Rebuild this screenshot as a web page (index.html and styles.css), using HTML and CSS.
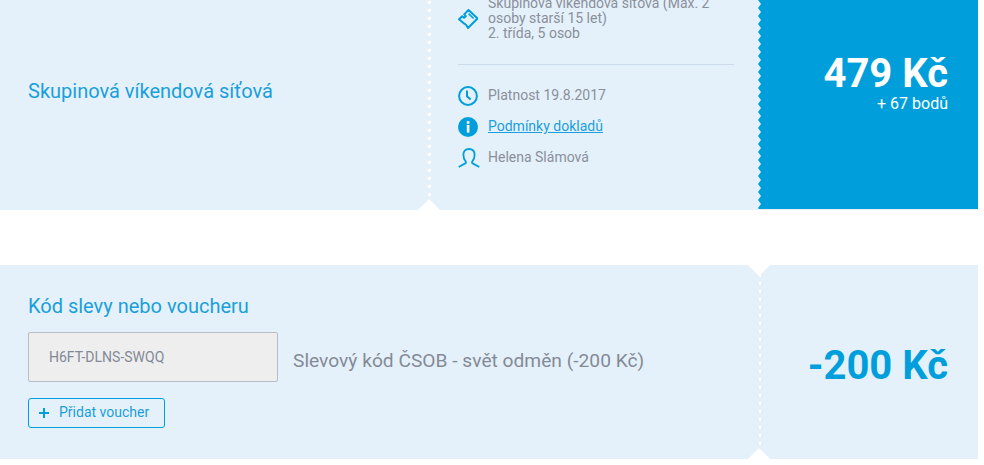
FILE: index.html
```html
<!DOCTYPE html>
<html lang="cs">
<head>
<meta charset="utf-8">
<title>Skupinová víkendová síťová</title>
<link rel="stylesheet" href="styles.css">
</head>
<body>
<section class="panel panel-ticket">
  <div class="ticket-name">
    <h2 class="title">Skupinová víkendová síťová</h2>
    <span class="notch notch-bottom"></span>
  </div>
  <div class="ticket-detail">
    <div class="row row-desc">
      <svg class="icon" viewBox="0 0 20 20" aria-hidden="true"><path d="M10.5 1 19.5 9.5 10 19 8 15.8 6 14.4 1 10.3 4.2 7.2 6 8.8 7.8 7.2 6.2 5.4Z" fill="none" stroke="#009fdb" stroke-width="2" stroke-linejoin="round"/><path d="M10.6 4.6 15.6 9.5" fill="none" stroke="#009fdb" stroke-width="1.6"/></svg>
      <p class="desc">Skupinová víkendová síťová (Max. 2<br>osoby starší 15 let)<br>2. třída, 5 osob</p>
    </div>
    <hr class="sep">
    <div class="row info"><svg class="icon" viewBox="0 0 20 20" aria-hidden="true"><circle cx="10" cy="10" r="8.9" fill="none" stroke="#009fdb" stroke-width="2"/><path d="M9 4.5V10.2L12.6 13.6" fill="none" stroke="#009fdb" stroke-width="2"/></svg><span>Platnost 19.8.2017</span></div>
    <div class="row info"><svg class="icon" viewBox="0 0 20 20" aria-hidden="true"><circle cx="10" cy="10" r="10" fill="#009fdb"/><rect x="8.8" y="4.2" width="2.6" height="2.6" fill="#fff"/><rect x="8.8" y="8" width="2.6" height="7.6" fill="#fff"/></svg><a class="link" href="#">Podmínky dokladů</a></div>
    <div class="row info"><svg class="icon icon-user" viewBox="0 0 22 20" aria-hidden="true"><path d="M.7 19 7.3 15.4C8.2 14.9 8.2 13.9 7.5 13.1 5.8 11.2 5.4 8.8 5.4 6.8 5.4 3 7.6 1 11 1S16.6 3 16.6 6.8C16.6 8.8 16.2 11.2 14.5 13.1 13.8 13.9 13.8 14.9 14.7 15.4L21.3 19" fill="none" stroke="#009fdb" stroke-width="1.8"/></svg><span>Helena Slámová</span></div>
  </div>
  <div class="price-box">
    <svg class="zigzag" aria-hidden="true"><defs><pattern id="teeth" width="3" height="8" patternUnits="userSpaceOnUse"><path d="M0 0 3 4 0 8 3 8 3 0Z" fill="#009fdb"/></pattern></defs><rect width="3" height="209" fill="url(#teeth)"/></svg>
    <strong class="price">479 Kč</strong>
    <span class="points">+ 67 bodů</span>
  </div>
</section>

<section class="panel panel-voucher">
  <div class="voucher-main">
    <h2 class="title voucher-title">Kód slevy nebo voucheru</h2>
    <div class="voucher-row">
      <input class="code" type="text" value="H6FT-DLNS-SWQQ" readonly>
      <span class="code-note">Slevový kód ČSOB - svět odměn (-200 Kč)</span>
    </div>
    <button class="add" type="button"><svg class="plus" viewBox="0 0 10 10" aria-hidden="true"><path d="M5 0V10M0 5H10" stroke="#009fdb" stroke-width="2"/></svg><span class="add-label">Přidat voucher</span></button>
  </div>
  <div class="discount">
    <span class="notch notch-top"></span>
    <strong class="discount-value">-200 Kč</strong>
    <span class="notch notch-bottom"></span>
  </div>
</section>
</body>
</html>
```

FILE: styles.css
```css
* { box-sizing: border-box; }

html, body { height: 100%; overflow: hidden; }

body {
  margin: 0;
  background: #fff;
  font-family: Roboto, "Liberation Sans", sans-serif;
  color: #8a8f9a;
}

.panel {
  display: flex;
  width: 978px;
  background: #e4f1fb;
}

.panel-ticket { height: 210px; }

.panel-voucher { height: 194px; margin-top: 55px; }

.title {
  margin: 0;
  font-size: 20px;
  line-height: 24px;
  font-weight: 400;
  color: #1a9fdc;
}

.ticket-name {
  position: relative;
  display: flex;
  align-items: center;
  width: 431px;
  padding: 0 0 29px 28px;
  background: repeating-linear-gradient(#fff 0 3px, transparent 3px 8px) right 0 top 1px / 3px 100% no-repeat;
}

.notch {
  position: absolute;
  width: 0;
  height: 0;
  border-left: 11px solid transparent;
  border-right: 11px solid transparent;
}

.notch-bottom { bottom: 0; border-bottom: 11px solid #fff; }

.notch-top { top: 0; border-top: 11px solid #fff; }

.ticket-name .notch-bottom { right: -9px; }

.ticket-detail {
  display: flex;
  flex-direction: column;
  justify-content: flex-end;
  width: 330px;
  padding: 0 27px 42px 27px;
  overflow: hidden;
}

.row { display: flex; align-items: center; }

.icon { flex: none; width: 20px; height: 20px; margin-right: 10px; }

.icon-user { width: 22px; margin-right: 8px; }

.desc {
  margin: 0;
  font-size: 14px;
  line-height: 15px;
}

.sep {
  width: 100%;
  margin: 23px 0 20px;
  border: 0;
  border-top: 1px solid #cbdbea;
}

.info {
  height: 21px;
  margin-bottom: 10px;
  font-size: 14px;
  line-height: 21px;
}

.info:last-child { margin-bottom: 0; }

.link { color: #1a9fdc; text-decoration: underline; }

.price-box {
  position: relative;
  flex: 1;
  display: flex;
  flex-direction: column;
  align-items: flex-end;
  height: 209px;
  padding: 52px 30px 0 0;
  background: #009fdb;
  color: #fff;
}

.zigzag {
  position: absolute;
  left: -3px;
  top: 0;
  width: 3px;
  height: 209px;
}

.price {
  font-size: 40px;
  line-height: 44px;
  font-weight: 700;
}

.points {
  font-size: 16px;
  line-height: 16px;
}

.voucher-main {
  width: 759px;
  padding: 29px 0 0 28px;
}

.voucher-title { margin-bottom: 14px; }

.voucher-row { display: flex; align-items: center; }

.code {
  width: 250px;
  height: 50px;
  padding: 0 20px;
  margin: 0 15px 0 0;
  border: 1px solid #b7bec9;
  border-radius: 2px;
  background: #eee;
  font-family: Roboto, "Liberation Sans", sans-serif;
  font-size: 14px;
  color: #838997;
  outline: 0;
}

.code-note {
  padding-top: 8px;
  font-size: 19.2px;
  line-height: 24px;
  color: #848a96;
}

.add {
  display: flex;
  align-items: center;
  width: 137px;
  height: 30px;
  margin-top: 16px;
  padding: 0 0 0 10px;
  border: 1px solid #009fdb;
  border-radius: 3px;
  background: transparent;
  font-family: Roboto, "Liberation Sans", sans-serif;
  font-size: 14px;
  color: #1a9fdc;
}

.add-label { margin-top: -2px; }

.plus { width: 10px; height: 10px; margin-right: 10px; }

.discount {
  position: relative;
  flex: 1;
  display: flex;
  justify-content: flex-end;
  align-items: center;
  padding: 8px 30px 0 0;
  background: repeating-linear-gradient(#fff 0 3px, transparent 3px 8px) left -1px top 1px / 3px 100% no-repeat;
}

.discount .notch { left: -11px; }

.discount-value {
  font-size: 40px;
  line-height: 44px;
  font-weight: 700;
  color: #009fdb;
}
```
